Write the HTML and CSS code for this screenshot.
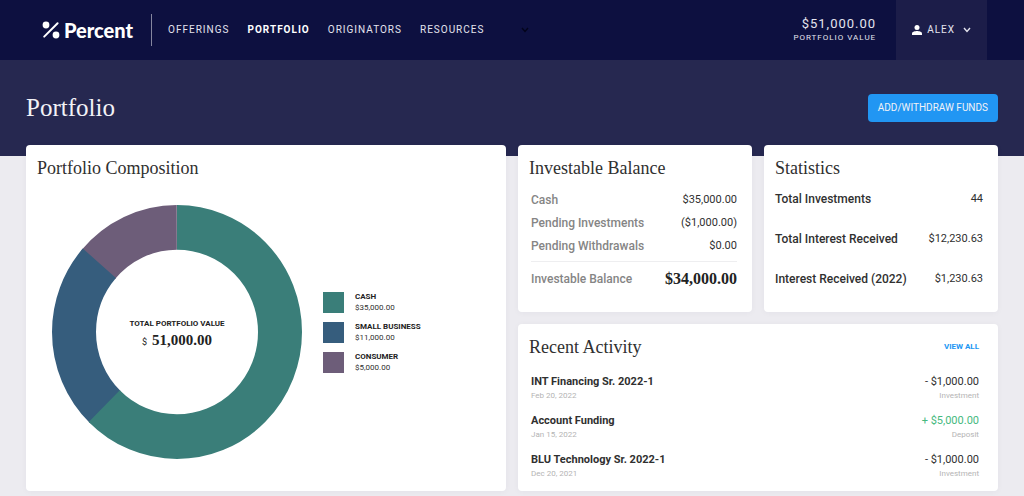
FILE: index.html
```html
<!DOCTYPE html>
<html lang="en">
<head>
<meta charset="utf-8">
<meta name="viewport" content="width=device-width, initial-scale=1">
<title>Percent – Portfolio</title>
<link rel="stylesheet" href="styles.css">
</head>
<body>
<header class="topbar">
  <a class="logo" href="#">
    <svg class="logo-mark" viewBox="0 0 18 18" aria-hidden="true">
      <circle cx="4" cy="4" r="3.4"/><circle cx="14" cy="14" r="3.4"/>
      <path d="M2.2 15.6 15.6 2.2"/>
    </svg>
    <span>Percent</span>
  </a>
  <nav class="nav">
    <a href="#">OFFERINGS</a>
    <a class="active" href="#">PORTFOLIO</a>
    <a href="#">ORIGINATORS</a>
    <a href="#">RESOURCES</a>
    <svg class="nav-chevron" viewBox="0 0 8 6" aria-hidden="true"><path d="M1 1 4 4.4 7 1"/></svg>
  </nav>
  <div class="value">
    <strong>$51,000.00</strong>
    <span>PORTFOLIO VALUE</span>
  </div>
  <button class="user" type="button">
    <svg class="user-icon" viewBox="0 0 10 10" aria-hidden="true"><circle cx="5" cy="2.5" r="2.5"/><path d="M0 10V8.4C0 6.8 3.3 6 5 6s5 .8 5 2.4V10z"/></svg>
    <span>ALEX</span>
    <svg class="user-chevron" viewBox="0 0 8 6" aria-hidden="true"><path d="M1 1 4 4.4 7 1"/></svg>
  </button>
</header>
<div class="banner">
  <h1>Portfolio</h1>
  <button class="funds" type="button">ADD/WITHDRAW FUNDS</button>
</div>
<main class="board">
  <section class="card composition">
    <h2>Portfolio Composition</h2>
    <div class="chart">
      <div class="donut">
        <svg viewBox="0 0 250 250" preserveAspectRatio="none" role="img" aria-label="Portfolio composition">
          <g transform="rotate(-90 125 125)">
            <circle class="ring consumer" cx="125" cy="125" r="103" pathLength="360" stroke-dasharray="50 310" stroke-dashoffset="-310"/>
            <circle class="ring small" cx="125" cy="125" r="103" pathLength="360" stroke-dasharray="87.2 360" stroke-dashoffset="-224"/>
            <circle class="ring cash" cx="125" cy="125" r="103" pathLength="360" stroke-dasharray="225 360"/>
          </g>
        </svg>
        <div class="total">
          <span class="total-label">TOTAL PORTFOLIO VALUE</span>
          <span class="total-sum"><span class="currency">$</span><b>51,000.00</b></span>
        </div>
      </div>
      <ul class="legend">
        <li><i class="swatch cash"></i><span><b>CASH</b>$35,000.00</span></li>
        <li><i class="swatch small"></i><span><b>SMALL BUSINESS</b>$11,000.00</span></li>
        <li><i class="swatch consumer"></i><span><b>CONSUMER</b>$5,000.00</span></li>
      </ul>
    </div>
  </section>
  <section class="card balance">
    <h2>Investable Balance</h2>
    <dl>
      <div><dt>Cash</dt><dd>$35,000.00</dd></div>
      <div><dt>Pending Investments</dt><dd>($1,000.00)</dd></div>
      <div><dt>Pending Withdrawals</dt><dd>$0.00</dd></div>
      <div class="sum"><dt>Investable Balance</dt><dd>$34,000.00</dd></div>
    </dl>
  </section>
  <section class="card statistics">
    <h2>Statistics</h2>
    <dl>
      <div><dt>Total Investments</dt><dd>44</dd></div>
      <div><dt>Total Interest Received</dt><dd>$12,230.63</dd></div>
      <div><dt>Interest Received (2022)</dt><dd>$1,230.63</dd></div>
    </dl>
  </section>
  <section class="card activity">
    <div class="card-head"><h2>Recent Activity</h2><a href="#">VIEW ALL</a></div>
    <ul>
      <li><span><b>INT Financing Sr. 2022-1</b><small>Feb 20, 2022</small></span><span class="amount">- $1,000.00<small>Investment</small></span></li>
      <li><span><b>Account Funding</b><small>Jan 15, 2022</small></span><span class="amount deposit">+ $5,000.00<small>Deposit</small></span></li>
      <li><span><b>BLU Technology Sr. 2022-1</b><small>Dec 20, 2021</small></span><span class="amount">- $1,000.00<small>Investment</small></span></li>
    </ul>
  </section>
</main>
</body>
</html>
```
FILE: styles.css
```css
* { box-sizing: border-box; }
body, h1, h2, dl, dd, ul { margin: 0; padding: 0; }
ul { list-style: none; }
a { text-decoration: none; color: inherit; }
button { border: 0; font: inherit; color: inherit; cursor: pointer; }
body {
  background: #ecebf0;
  color: #303030;
  font: 11px/16px Roboto, "Open Sans", sans-serif;
}
h1, h2 { font-family: "Liberation Serif", serif; font-weight: 400; }

.topbar {
  display: flex;
  align-items: center;
  height: 60px;
  padding: 0 37px 0 42px;
  background: #0d1040;
  color: #e4e4ee;
  letter-spacing: 1px;
}
.logo {
  display: flex;
  align-items: center;
  gap: 4px;
  height: 32px;
  padding-right: 18px;
  border-right: 1px solid #85869f;
  color: #fff;
  font: 900 20px/24px Lato, sans-serif;
  letter-spacing: 0;
}
.logo-mark { width: 18px; height: 18px; fill: #fff; }
.logo-mark path { stroke: #fff; stroke-width: 2; stroke-linecap: round; }
.nav { display: flex; align-items: center; gap: 18px; padding-left: 16px; font-size: 10px; }
.nav .active { color: #fff; font-weight: 700; }
.nav-chevron, .user-chevron { width: 8px; height: 6px; fill: none; stroke: #03041a; stroke-width: 1.4; }
.nav-chevron { margin-left: 19px; }
.value { display: flex; flex-direction: column; margin-left: auto; text-align: right; }
.value strong { font-size: 13px; font-weight: 400; line-height: 16px; }
.value span { font-size: 8px; line-height: 12px; }
.user {
  display: flex;
  align-items: center;
  align-self: stretch;
  gap: 5px;
  margin-left: 20px;
  padding: 0 16px;
  background: #1c1d49;
  font-size: 10px;
  letter-spacing: 1px;
}
.user-icon { width: 10px; height: 10px; fill: #fff; }
.user-chevron { margin-left: 3px; stroke: #e4e4ee; }

.banner {
  display: flex;
  justify-content: space-between;
  align-items: center;
  height: 96px;
  padding: 0 26px;
  background: #262850;
  color: #f2f2f6;
}
.banner h1 { font-size: 25px; line-height: 32px; }
.funds { height: 28px; padding: 0 10px; border-radius: 4px; background: #2196f3; font-size: 10px; }

.board {
  display: grid;
  grid-template-columns: 480fr 234fr 234fr;
  gap: 12px;
  margin-top: -11px;
  padding: 0 26px 5px;
}
.card {
  min-height: 167px;
  padding: 11px;
  border-radius: 4px;
  background: #fff;
  box-shadow: 0 1px 6px rgba(30, 30, 70, 0.04);
}
.card h2 { font-size: 18px; line-height: 24px; }
.composition { grid-row: span 2; }
.chart { display: flex; align-items: center; gap: 21px; padding: 25px 15px 0; }
.donut { display: grid; width: 250px; height: 254px; }
.donut svg, .total { grid-area: 1 / 1; width: 100%; height: 100%; }
.ring { fill: none; stroke-width: 44; }
.ring.cash { stroke: #3a7e79; }
.ring.small { stroke: #365d7d; }
.ring.consumer { stroke: #6d5d79; }
.total { display: flex; flex-direction: column; align-items: center; justify-content: center; padding-top: 2px; color: #222; }
.total-label { font-size: 8px; font-weight: 700; line-height: 16px; }
.total-sum { display: flex; align-items: baseline; gap: 5px; }
.total-sum b { font: 700 15px/16px "Liberation Serif", serif; }
.currency { font-size: 9px; }
.legend { display: grid; gap: 8px; }
.legend li { display: flex; align-items: center; gap: 11px; font-size: 8px; line-height: 11px; }
.legend b { display: block; color: #222; }
.swatch { width: 21px; height: 21px; }
.swatch.cash { background: #3a7e79; }
.swatch.small { background: #365d7d; }
.swatch.consumer { background: #6d5d79; }

dl div { display: flex; justify-content: space-between; align-items: center; }
dt { font-size: 12px; font-weight: 500; }
.balance dl { padding: 8px 4px 0 2px; }
.balance dl div { height: 23px; }
.balance dt { color: #858585; }
.balance dl .sum { height: 34px; margin-top: 4px; border-top: 1px solid #eeeef0; }
.balance .sum dd { color: #222; font: 700 16px/16px "Liberation Serif", serif; }
.statistics dl { display: grid; gap: 24px; padding: 11px 4px 0 0; }

.card-head { display: flex; align-items: center; justify-content: space-between; padding-right: 8px; }
.card-head a { color: #2196f3; font-size: 8px; font-weight: 700; }
.activity { grid-column: span 2; }
.activity ul { display: grid; gap: 11px; padding: 15px 8px 0 2px; }
.activity li { display: flex; justify-content: space-between; }
.activity b { font-weight: 700; }
.activity small { display: block; color: #b4b4b4; font-size: 8px; font-weight: 400; line-height: 12px; }
.amount { text-align: right; }
.deposit { color: #46b97e; }
```
